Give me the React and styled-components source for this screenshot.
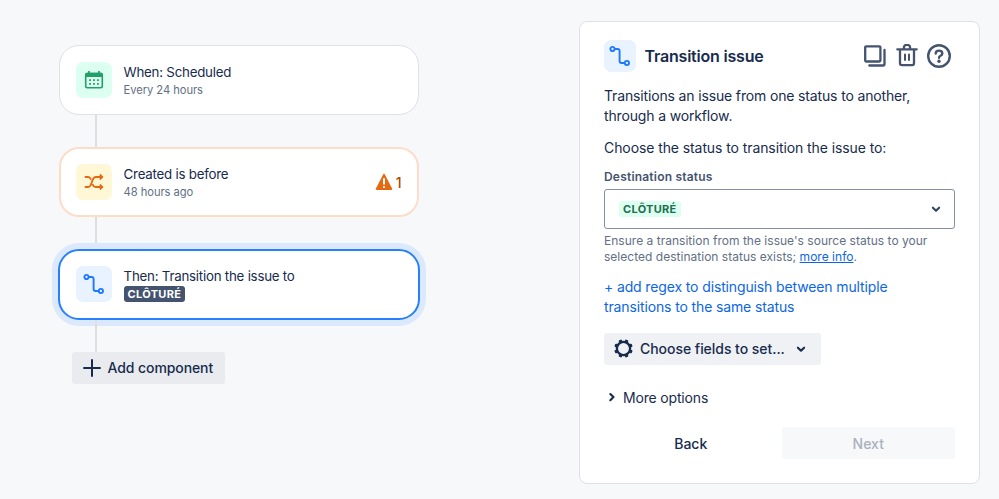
import React from "react";
import styled, { createGlobalStyle } from "styled-components";

const GlobalStyle = createGlobalStyle`
  * {
    box-sizing: border-box;
  }

  body {
    margin: 0;
    background: #f7f8fa;
    color: #172b4d;
    font-family: Inter, "Liberation Sans", sans-serif;
    font-size: 14px;
  }

  button {
    border: 0;
    font: inherit;
    color: inherit;
  }

  svg {
    display: block;
    flex: none;
  }
`;

const Page = styled.div`
  display: flex;
  justify-content: space-between;
  align-items: flex-start;
  width: 999px;
  height: 499px;
  padding: 21px 19px 0 57.6px;
  overflow: hidden;
`;

const Flow = styled.div`
  display: flex;
  flex-direction: column;
  width: 362px;
  padding-top: 24px;
`;

const Step = styled.div`
  display: flex;
  align-items: center;
  height: ${p => (p.$selected ? 71.6 : 70)}px;
  margin: 0 ${p => (p.$selected ? 0 : 1)}px;
  padding: 0 ${p => (p.$warning ? 15 : 16)}px;
  border: ${p => (p.$selected || p.$warning ? 2 : 1)}px solid
    ${p => (p.$selected ? "#2680fb" : p.$warning ? "#fddcc9" : "#dfe1e6")};
  border-radius: ${p => (p.$selected ? 21 : 20)}px;
  box-shadow: ${p => (p.$selected ? "0 0 0 6px #dce9fd" : "none")};
  background: #fff;
`;

const Connector = styled.div`
  width: 2px;
  height: ${p => p.$height}px;
  margin-left: 37px;
  background: #dcdee2;
`;

const Tile = styled.div`
  display: grid;
  place-items: center;
  flex: none;
  width: ${p => p.$size || 36}px;
  height: ${p => p.$size || 36}px;
  border-radius: 7px;
  background: ${p => p.$color};
`;

const StepText = styled.div`
  flex: 1;
  margin-left: 12px;
`;

const StepTitle = styled.div`
  font-size: 13.3px;
  line-height: 19px;
  letter-spacing: -0.23px;
`;

const StepMeta = styled.div`
  color: #626f86;
  font-size: 11.2px;
  line-height: 16px;
  letter-spacing: -0.06px;
`;

const Lozenge = styled.span`
  display: block;
  width: fit-content;
  height: 16px;
  padding: 0 4px;
  border-radius: 3px;
  background: ${p => (p.$bold ? "#44546f" : "#dcfff1")};
  color: ${p => (p.$bold ? "#fff" : "#216e4e")};
  font-size: 11px;
  font-weight: 700;
  line-height: 16px;
  letter-spacing: 0.3px;
`;

const Warning = styled.div`
  display: flex;
  align-items: center;
  gap: 3px;
  color: #a54800;
  font-weight: 500;
`;

const AddButton = styled.button`
  display: flex;
  align-items: center;
  gap: 7px;
  width: 153px;
  height: 32px;
  margin-left: 14px;
  padding: 0 11px;
  border-radius: 3px;
  background: #e9ebee;
  font-weight: 500;
  letter-spacing: -0.1px;
  white-space: nowrap;
`;

const Panel = styled.div`
  width: 401px;
  height: 463px;
  padding: 18px 24px 0;
  border: 1px solid #dfe1e6;
  border-radius: 8px;
  background: #fff;
`;

const PanelHeader = styled.div`
  display: flex;
  align-items: center;
  height: 32px;
`;

const PanelTitle = styled.h1`
  flex: 1;
  margin: 0 0 0 8.5px;
  font-size: 16px;
  font-weight: 600;
  letter-spacing: -0.2px;
`;

const Actions = styled.div`
  display: flex;
  gap: 8px;
  margin-right: 4px;
  color: #44546f;
`;

const Text = styled.p`
  margin: ${p => p.$top}px 0 0;
  line-height: 20px;
  white-space: nowrap;
  letter-spacing: -0.15px;
`;

const Prompt = styled(Text)`
  letter-spacing: -0.09px;
`;

const Label = styled.div`
  margin-top: 11px;
  color: #44546f;
  font-size: 12px;
  font-weight: 600;
  line-height: 16px;
  letter-spacing: 0.2px;
`;

const Select = styled.div`
  display: flex;
  align-items: center;
  justify-content: space-between;
  height: 40px;
  margin-top: 4px;
  padding: 0 12px 0 14px;
  border: 1px solid #8590a2;
  border-radius: 3px;
  color: #344563;
`;

const Hint = styled.div`
  margin-top: 4px;
  color: #626f86;
  font-size: 12px;
  line-height: 16px;
  white-space: nowrap;
  letter-spacing: 0.02px;

  a {
    color: #0c66e4;
    text-decoration: underline;
  }
`;

const RegexLink = styled(Text)`
  color: #0c66e4;
  letter-spacing: -0.13px;
`;

const FieldsButton = styled.button`
  display: flex;
  align-items: center;
  width: 217px;
  height: 32px;
  margin-top: 16px;
  padding: 0 14px 1px 10px;
  border-radius: 3px;
  background: #f0f1f4;
  font-weight: 500;
  letter-spacing: -0.04px;
  white-space: nowrap;

  span {
    flex: 1;
    margin-left: 7px;
    text-align: left;
  }
`;

const MoreOptions = styled.div`
  display: flex;
  align-items: center;
  gap: 5px;
  height: 20px;
  margin-top: 22px;
  padding-left: 2px;
  letter-spacing: -0.17px;
`;

const Footer = styled.div`
  display: grid;
  grid-template-columns: 1fr 1fr;
  gap: 4px;
  margin-top: 20px;
`;

const FooterButton = styled.button`
  height: 32px;
  border-radius: 3px;
  background: ${p => (p.disabled ? "#f7f8f9" : "transparent")};
  color: ${p => (p.disabled ? "#a9b1bf" : "#172b4d")};
  font-weight: 500;
`;

const CalendarIcon = () => (
  <svg width="20" height="20" viewBox="0 0 20 20">
    <path d="M5 1v3M15 1v3" stroke="#22a06b" strokeWidth="1.7" />
    <rect x="1.7" y="3.6" width="16.6" height="14.2" rx="1.5" fill="none" stroke="#22a06b" strokeWidth="1.6" />
    <path d="M1.5 4q0-1.2 1.2-1.2h14.6q1.2 0 1.2 1.2v3h-17z" fill="#22a06b" />
    <path
      d="M5.2 9.2H7V11H5.2zM9.1 9.2h1.8V11H9.1zM13 9.2h1.8V11H13zM5.2 13H7v1.8H5.2zM9.1 13h1.8v1.8H9.1zM13 13h1.8v1.8H13z"
      fill="#22a06b"
    />
  </svg>
);

const ShuffleIcon = () => (
  <svg width="20" height="20" viewBox="0 0 20 20" fill="none" stroke="#e56910" strokeWidth="1.8">
    <path
      d="M1.5 5h2.7c1.3 0 2 .8 2.5 2M1.5 15h2.7c1.4 0 2.1-.8 2.6-2.1l2.2-5.8C9.6 5.7 10.3 5 11.6 5H17M8.8 12.8c.6 1.5 1.3 2.2 2.8 2.2H17"
      strokeLinecap="round"
    />
    <path
      d="M16.3 2.7L18.7 5l-2.4 2.3zM16.3 12.7l2.4 2.3-2.4 2.3z"
      fill="#e56910"
      strokeWidth="1.2"
      strokeLinejoin="round"
    />
  </svg>
);

const TransitionIcon = () => (
  <svg width="22" height="22" viewBox="0 0 22 22" fill="none" stroke="#1d7afc" strokeWidth="1.9">
    <circle cx="3.5" cy="4" r="2.1" />
    <circle cx="17.9" cy="18" r="2.1" />
    <path d="M5.6 4h3c1.3 0 2 .7 2 2v10c0 1.3.7 2 2 2h3.2" />
  </svg>
);

const WarningIcon = () => (
  <svg width="18" height="18" viewBox="0 0 18 18">
    <path d="M8.3 1.2q.7-1.2 1.4 0l7.4 14.4q.6 1.4-.8 1.400H1.7q-1.4 0-.8-1.4z" fill="#e56910" />
    <path d="M9 6v4.8" stroke="#fff" strokeWidth="2" strokeLinecap="round" />
    <circle cx="9" cy="14" r="1.1" fill="#fff" />
  </svg>
);

const PlusIcon = () => (
  <svg width="18" height="18" viewBox="0 0 18 18">
    <path d="M9 1v16M1 9h16" stroke="#172b4d" strokeWidth="2" strokeLinecap="round" />
  </svg>
);

const CopyIcon = () => (
  <svg width="24" height="24" viewBox="0 0 24 24" fill="none" stroke="currentColor" strokeWidth="2.3">
    <rect x="2.2" y="2.3" width="15.2" height="15.2" rx="1" />
    <path d="M21.5 6v14q0 1.5-1.5 1.500H6.300" strokeLinecap="round" />
  </svg>
);

const TrashIcon = () => (
  <svg width="24" height="24" viewBox="0 0 24 24" fill="none" stroke="currentColor" strokeWidth="2.3">
    <path
      d="M2.3 5.3h19.4M8.9 5V3.400q0-2.500 3.100-2.500t3.100 2.500V5M5 6v13.300q0 1.900 1.900 1.900h10.200q1.900 0 1.900-1.900V6"
      strokeLinecap="round"
    />
    <path d="M10 10.500v5.500M14 10.500v5.500" strokeLinecap="round" strokeWidth="2" />
  </svg>
);

const HelpIcon = () => (
  <svg width="24" height="24" viewBox="0 0 24 24" fill="none" stroke="currentColor" strokeWidth="2.4">
    <circle cx="12" cy="12" r="10.8" />
    <path d="M8.700 9.600q0-3 3.300-3t3.300 2.800q0 1.500-1.700 2.300-1.600.8-1.600 2.100" strokeLinecap="round" />
    <circle cx="12" cy="17.3" r="1.7" fill="currentColor" stroke="none" />
  </svg>
);

const ChevronIcon = ({ right }) => (
  <svg width="12" height="12" viewBox="0 0 12 12" fill="none" stroke="currentColor" strokeWidth="2.1">
    <path
      d={right ? "M4.3 3L7.5 6.1l-3.2 3.1" : "M2.9 4.7L6 7.7l3.1-3"}
      strokeLinecap="round"
      strokeLinejoin="round"
    />
  </svg>
);

const TEETH = [22.5, 67.5, 112.5, 157.5, 202.5, 247.5, 292.5, 337.5];

const GearIcon = () => (
  <svg width="19" height="19" viewBox="0 0 19 19">
    <circle cx="9.5" cy="9.5" r="6.6" fill="none" stroke="#172b4d" strokeWidth="2.3" />
    {TEETH.map(angle => (
      <rect
        key={angle}
        x="7.8"
        y="0.2"
        width="3.4"
        height="3.5"
        rx="1"
        fill="#172b4d"
        transform={`rotate(${angle} 9.5 9.5)`}
      />
    ))}
  </svg>
);

export default () => {
  return (
    <>
      <GlobalStyle />
      <Page>
        <Flow>
          <Step>
            <Tile $color="#dcfff1">
              <CalendarIcon />
            </Tile>
            <StepText>
              <StepTitle>When: Scheduled</StepTitle>
              <StepMeta>Every 24 hours</StepMeta>
            </StepText>
          </Step>
          <Connector $height={32.4} />
          <Step $warning>
            <Tile $color="#fff7d6">
              <ShuffleIcon />
            </Tile>
            <StepText>
              <StepTitle>Created is before</StepTitle>
              <StepMeta>48 hours ago</StepMeta>
            </StepText>
            <Warning>
              <WarningIcon />
              <span>1</span>
            </Warning>
          </Step>
          <Connector $height={31.2} />
          <Step $selected>
            <Tile $color="#e9f2ff">
              <TransitionIcon />
            </Tile>
            <StepText>
              <StepTitle>Then: Transition the issue to</StepTitle>
              <Lozenge $bold>CLÔTURÉ</Lozenge>
            </StepText>
          </Step>
          <Connector $height={31.4} />
          <AddButton>
            <PlusIcon />
            Add component
          </AddButton>
        </Flow>
        <Panel>
          <PanelHeader>
            <Tile $color="#e9f2ff" $size={32}>
              <TransitionIcon />
            </Tile>
            <PanelTitle>Transition issue</PanelTitle>
            <Actions>
              <CopyIcon />
              <TrashIcon />
              <HelpIcon />
            </Actions>
          </PanelHeader>
          <Text $top={14}>
            Transitions an issue from one status to another,
            <br />
            through a workflow.
          </Text>
          <Prompt $top={12}>Choose the status to transition the issue to:</Prompt>
          <Label>Destination status</Label>
          <Select>
            <Lozenge>CLÔTURÉ</Lozenge>
            <ChevronIcon />
          </Select>
          <Hint>
            Ensure a transition from the issue's source status to your
            <br />
            selected destination status exists; <a>more info</a>.
          </Hint>
          <RegexLink $top={12}>
            + add regex to distinguish between multiple
            <br />
            transitions to the same status
          </RegexLink>
          <FieldsButton>
            <GearIcon />
            <span>Choose fields to set...</span>
            <ChevronIcon />
          </FieldsButton>
          <MoreOptions>
            <ChevronIcon right />
            More options
          </MoreOptions>
          <Footer>
            <FooterButton>Back</FooterButton>
            <FooterButton disabled>Next</FooterButton>
          </Footer>
        </Panel>
      </Page>
    </>
  );
};
